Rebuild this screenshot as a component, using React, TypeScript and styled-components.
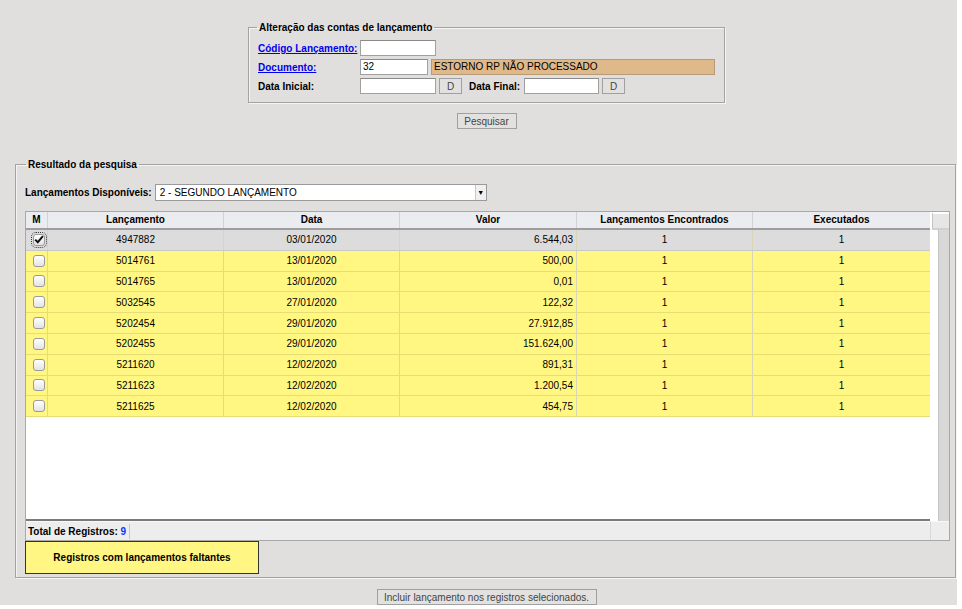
import styled, { createGlobalStyle } from 'styled-components';

const GlobalStyle = createGlobalStyle`
  html, body {
    margin: 0;
    padding: 0;
    background: #fff;
  }
  body {
    font-family: "Liberation Sans", Arial, sans-serif;
    font-size: 10px;
    color: #000;
  }
`;

type Row = {
  id: string;
  data: string;
  valor: string;
  encontrados: number;
  executados: number;
  checked?: boolean;
};

const rows: Row[] = [
  { id: '4947882', data: '03/01/2020', valor: '6.544,03', encontrados: 1, executados: 1, checked: true },
  { id: '5014761', data: '13/01/2020', valor: '500,00', encontrados: 1, executados: 1 },
  { id: '5014765', data: '13/01/2020', valor: '0,01', encontrados: 1, executados: 1 },
  { id: '5032545', data: '27/01/2020', valor: '122,32', encontrados: 1, executados: 1 },
  { id: '5202454', data: '29/01/2020', valor: '27.912,85', encontrados: 1, executados: 1 },
  { id: '5202455', data: '29/01/2020', valor: '151.624,00', encontrados: 1, executados: 1 },
  { id: '5211620', data: '12/02/2020', valor: '891,31', encontrados: 1, executados: 1 },
  { id: '5211623', data: '12/02/2020', valor: '1.200,54', encontrados: 1, executados: 1 },
  { id: '5211625', data: '12/02/2020', valor: '454,75', encontrados: 1, executados: 1 },
];

const COLS = '22px 176px 176px 177px 176px 177px';

const Page = styled.div`
  width: 957px;
  height: 605px;
  overflow: hidden;
  background: #e0dfdd;
  display: flex;
  flex-direction: column;
`;

const Centered = styled.div<{ $top: number }>`
  display: flex;
  justify-content: center;
  padding-left: 16px;
  margin-top: ${p => p.$top}px;
`;

const Fieldset = styled.fieldset`
  margin: 0;
  border: 1px solid #a3a3a3;
  box-shadow: inset 1px 1px 0 #f4f4f4, 1px 1px 0 #f4f4f4;
  legend {
    font-weight: bold;
    font-size: 10px;
    padding: 0 2px;
    margin-left: -1px;
  }
`;

const SearchSet = styled(Fieldset)`
  width: 477px;
  box-sizing: border-box;
  padding: 0 8px 8px 9px;
`;

const FormGrid = styled.div`
  display: grid;
  grid-template-columns: 102px auto;
  grid-auto-rows: 16px;
  row-gap: 3px;
  align-items: center;
  margin-top: 7px;
`;

const Label = styled.span`
  font-weight: bold;
  white-space: nowrap;
`;

const InlineLabel = styled(Label)`
  margin: 0 1px 0 4px;
`;

const LinkLabel = styled.a`
  font-weight: bold;
  color: #0000ee;
  text-decoration: underline;
  white-space: nowrap;
  cursor: pointer;
`;

const Line = styled.div`
  display: flex;
  align-items: center;
  gap: 3px;
`;

const TextInput = styled.div<{ $w: number }>`
  width: ${p => p.$w}px;
  height: 16px;
  box-sizing: border-box;
  background: #fff;
  border: 1px solid #a0a0a0;
  border-top-color: #8a8a8a;
  padding: 0 2px;
  line-height: 14px;
  font-size: 10px;
`;

const DescBox = styled(TextInput)`
  background: #e0b98a;
  border-color: #b79b78;
`;

const SmallButton = styled.button<{ $w: number }>`
  width: ${p => p.$w}px;
  height: 16px;
  padding: 0;
  box-sizing: border-box;
  background: #e2e1df;
  border: 1px solid #a0a0a0;
  color: #444;
  font-family: "Liberation Sans", Arial, sans-serif;
  font-size: 10px;
  line-height: 13px;
  white-space: nowrap;
`;

const ResultSet = styled(Fieldset)`
  margin: 30px 1px 0 15px;
  height: 426px;
  box-sizing: border-box;
  padding: 0 5px 0 9px;
  legend {
    margin-left: 1px;
  }
`;

const Toolbar = styled.div`
  display: flex;
  align-items: center;
  gap: 3px;
  margin-top: 14px;
  height: 17px;
`;

const Select = styled.div`
  width: 332px;
  height: 17px;
  box-sizing: border-box;
  background: #fff;
  border: 1px solid #9a9a9a;
  display: flex;
  align-items: center;
  justify-content: space-between;
  padding-left: 4px;
`;

const SelectArrow = styled.span`
  width: 10px;
  height: 15px;
  background: #f0f0f0;
  border-left: 1px solid #c8c8c8;
  display: flex;
  align-items: center;
  justify-content: center;
  font-size: 7px;
  color: #000;
`;

const Grid = styled.div`
  margin-top: 10px;
  width: 925px;
  height: 330px;
  box-sizing: border-box;
  border: 1px solid #a8a8a8;
  background: #fff;
  display: grid;
  grid-template-rows: 18px 1fr 19px;
  grid-template-columns: 904px 19px;
`;

const HeadRow = styled.div`
  display: grid;
  grid-template-columns: ${COLS};
  background: #ebecf0;
  border-bottom: 2px solid #9d9d9d;
`;

const HeadCell = styled.div`
  font-weight: bold;
  text-align: center;
  line-height: 16px;
  border-right: 1px solid #d2d2d6;
  &:last-child {
    border-right: none;
  }
`;

const Corner = styled.div`
  background: #e6e6e6;
  border-bottom: 2px solid #d0d0d0;
  box-shadow: inset 1px 0 0 #c4c4c4, inset 0 1px 0 #fff;
  margin: 1px 0 0 2px;
`;

const Body = styled.div`
  border-bottom: 2px solid #7a7a7a;
`;

const DataRow = styled.div<{ $selected?: boolean }>`
  display: grid;
  grid-template-columns: ${COLS};
  height: 20.8px;
  box-sizing: border-box;
  background: ${p => (p.$selected ? '#dcdcdc' : '#fff781')};
  border-bottom: 1px solid ${p => (p.$selected ? '#c8c8c8' : '#e6dd75')};
`;

const Cell = styled.div<{ $align?: 'left' | 'center' | 'right' }>`
  display: flex;
  align-items: center;
  justify-content: ${p => (p.$align === 'right' ? 'flex-end' : p.$align === 'left' ? 'flex-start' : 'center')};
  padding: 0 3px;
  border-right: 1px solid #d9d6b8;
  &:last-child {
    border-right: none;
  }
`;

const CheckCell = styled(Cell)`
  padding: 0 0 0 4px;
`;

const Check = styled.span<{ $checked?: boolean }>`
  width: 12px;
  height: 12px;
  box-sizing: border-box;
  border: 1px solid #9a9a9a;
  border-radius: 3px;
  background: linear-gradient(#ffffff, #e3e3e3);
  display: flex;
  align-items: center;
  justify-content: center;
  outline: ${p => (p.$checked ? '1px dotted #333' : 'none')};
  outline-offset: 1px;
`;

const ScrollTrack = styled.div`
  margin-left: 8px;
  width: 10px;
  background: #d8d8d8;
  border-left: 1px solid #c4c4c4;
`;

const Footer = styled.div`
  background: #ededed;
  display: flex;
  align-items: center;
  padding-left: 2px;
  border-top: 1px solid #f8f8f8;
`;

const Total = styled.span`
  font-weight: bold;
  padding-right: 3px;
  border-right: 1px solid #c8c8c8;
  line-height: 15px;
  b {
    color: #0a37ff;
  }
`;

const FooterCorner = styled.div`
  background: #ededed;
  border-left: 1px solid #d8d8d8;
  border-top: 1px solid #f8f8f8;
`;

const LegendBox = styled.div`
  width: 234px;
  height: 33px;
  box-sizing: border-box;
  background: #fff683;
  border: 1px solid #333;
  display: flex;
  align-items: center;
  justify-content: center;
  font-weight: bold;
`;

const CheckMark = () => (
  <svg width="10" height="9" viewBox="0 0 10 9">
    <path d="M1.2 4.6 L3.8 7.2 L8.9 1.2" fill="none" stroke="#111" strokeWidth="2" />
  </svg>
);

export default function App() {
  return (
    <>
      <GlobalStyle />
      <Page>
        <Centered $top={22}>
          <SearchSet>
            <legend>Alteração das contas de lançamento</legend>
            <FormGrid>
              <LinkLabel>Código Lançamento:</LinkLabel>
              <Line>
                <TextInput $w={76} />
              </Line>
              <LinkLabel>Documento:</LinkLabel>
              <Line>
                <TextInput $w={68}>32</TextInput>
                <DescBox $w={284}>ESTORNO RP NÃO PROCESSADO</DescBox>
              </Line>
              <Label>Data Inicial:</Label>
              <Line>
                <TextInput $w={76} />
                <SmallButton $w={23}>D</SmallButton>
                <InlineLabel>Data Final:</InlineLabel>
                <TextInput $w={75} />
                <SmallButton $w={23}>D</SmallButton>
              </Line>
            </FormGrid>
          </SearchSet>
        </Centered>
        <Centered $top={10}>
          <SmallButton $w={60}>Pesquisar</SmallButton>
        </Centered>

        <ResultSet>
          <legend>Resultado da pesquisa</legend>
          <Toolbar>
            <Label>Lançamentos Disponíveis:</Label>
            <Select>
              <span>2 - SEGUNDO LANÇAMENTO</span>
              <SelectArrow>▼</SelectArrow>
            </Select>
          </Toolbar>
          <Grid>
            <HeadRow>
              <HeadCell>M</HeadCell>
              <HeadCell>Lançamento</HeadCell>
              <HeadCell>Data</HeadCell>
              <HeadCell>Valor</HeadCell>
              <HeadCell>Lançamentos Encontrados</HeadCell>
              <HeadCell>Executados</HeadCell>
            </HeadRow>
            <Corner />
            <Body>
              {rows.map(r => (
                <DataRow key={r.id} $selected={r.checked}>
                  <CheckCell>
                    <Check $checked={r.checked}>{r.checked && <CheckMark />}</Check>
                  </CheckCell>
                  <Cell>{r.id}</Cell>
                  <Cell>{r.data}</Cell>
                  <Cell $align="right">{r.valor}</Cell>
                  <Cell>{r.encontrados}</Cell>
                  <Cell>{r.executados}</Cell>
                </DataRow>
              ))}
            </Body>
            <ScrollTrack />
            <Footer>
              <Total>
                Total de Registros: <b>{rows.length}</b>
              </Total>
            </Footer>
            <FooterCorner />
          </Grid>
          <LegendBox>Registros com lançamentos faltantes</LegendBox>
        </ResultSet>

        <Centered $top={11}>
          <SmallButton $w={220}>Incluir lançamento nos registros selecionados.</SmallButton>
        </Centered>
      </Page>
    </>
  );
}
